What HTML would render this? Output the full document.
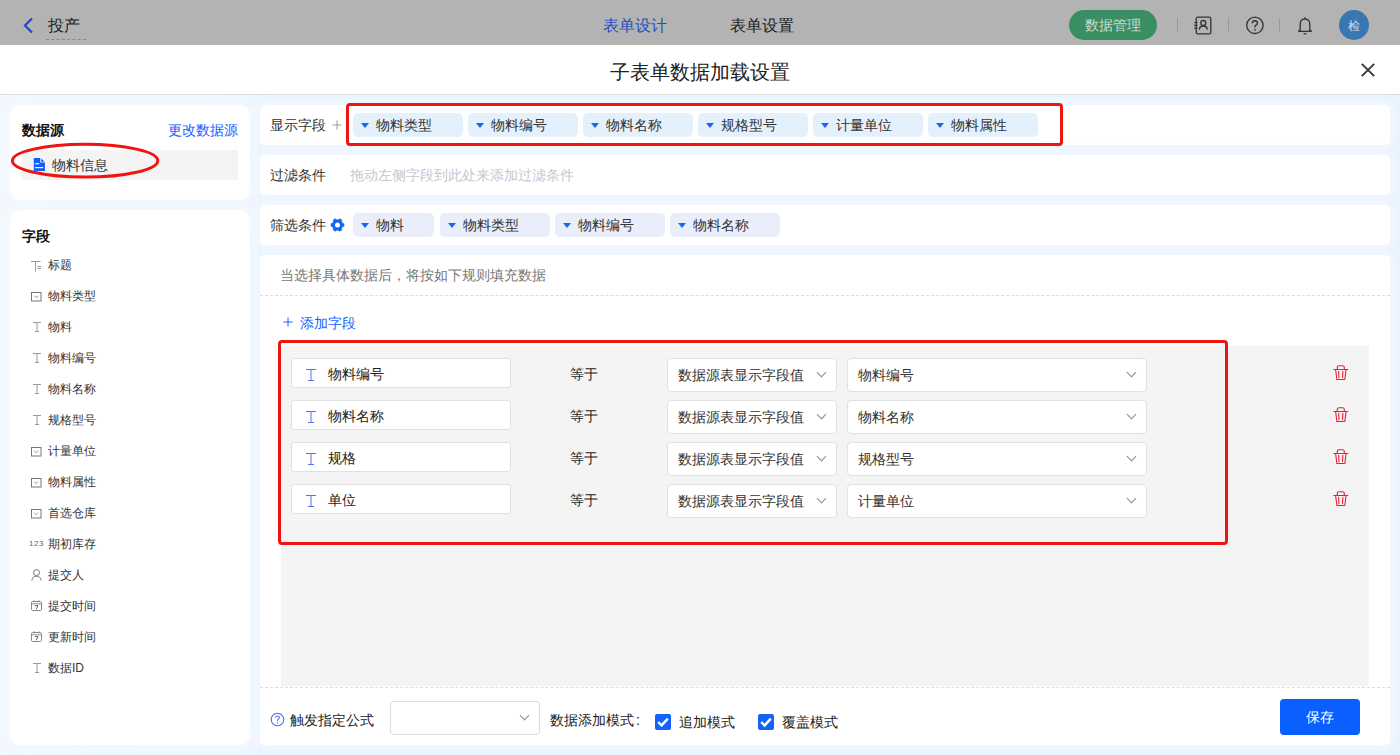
<!DOCTYPE html>
<html><head><meta charset="utf-8">
<style>
*{box-sizing:border-box;margin:0;padding:0}
html,body{width:1400px;height:755px;overflow:hidden}
body{position:relative;background:#e9f3fe;font-family:"Liberation Sans",sans-serif;font-size:14px;color:#222}
.a{position:absolute}
.t{position:absolute;white-space:nowrap;line-height:1}
#hdr{left:0;top:0;width:1400px;height:45px;background:#b3b3b3}
#ttl{left:0;top:45px;width:1400px;height:50px;background:#fff;border-bottom:1px solid #dcdcdc}
.card{position:absolute;background:#fff;border-radius:10px;box-shadow:0 0 10px 4px rgba(243,249,255,0.95)}
.row{position:absolute;left:260px;width:1130px;height:40px;background:#fff;border-radius:5px;box-shadow:0 0 10px 4px rgba(243,249,255,0.95)}
.tag{position:absolute;height:24px;border-radius:5px;background:#e4f1fd}
.tag2{background:#e9eefa}
.tri{position:absolute;left:8px;top:10px;width:0;height:0;border-left:4px solid transparent;border-right:4px solid transparent;border-top:5px solid #1766f5}
.tag .t{left:23px;top:5px;font-size:14px;color:#333}
.fi{position:absolute;left:22px;width:200px;height:20px}
.fi .t{left:26px;top:4px;font-size:12px;color:#333}
.inp{position:absolute;left:291px;width:220px;height:30px;background:#fff;border:1px solid #e1e1e1;border-radius:3px}
.sel{position:absolute;height:34px;background:#fff;border:1px solid #e1e1e1;border-radius:4px}
.sel .t{top:9px;left:10px;color:#333}
.chev{position:absolute;width:7px;height:7px;border-right:1px solid #8a8a8a;border-bottom:1px solid #8a8a8a;transform:rotate(45deg)}
</style></head><body>

<!-- header -->
<div id="hdr" class="a">
  <svg class="a" style="left:22px;top:17px" width="12" height="17" viewBox="0 0 12 17"><path d="M10 1.5 L3 8.5 L10 15.5" fill="none" stroke="#1f48c8" stroke-width="2.2"/></svg>
  <div class="t" style="left:48px;top:18px;font-size:16px;color:#222">投产</div>
  <div class="a" style="left:46px;top:39px;width:40px;border-top:1px dashed #8a8a8a"></div>
  <div class="t" style="left:603px;top:18px;font-size:16px;color:#1e4fc4">表单设计</div>
  <div class="t" style="left:730px;top:18px;font-size:16px;color:#222">表单设置</div>
  <div class="a" style="left:1069px;top:10px;width:88px;height:30px;border-radius:15px;background:#3a8f62"></div>
  <div class="t" style="left:1085px;top:18px;font-size:14px;color:#c9dccf">数据管理</div>
  <div class="a" style="left:1177px;top:18px;width:1px;height:14px;background:#999"></div>
  <div class="a" style="left:1228px;top:18px;width:1px;height:14px;background:#999"></div>
  <div class="a" style="left:1279px;top:18px;width:1px;height:14px;background:#999"></div>
  <svg class="a" style="left:1192px;top:15px" width="22" height="21" viewBox="0 0 22 21"><rect x="4.2" y="2.2" width="14.6" height="16.6" rx="1.6" fill="none" stroke="#333" stroke-width="1.3"/><circle cx="11.3" cy="8" r="2.5" fill="none" stroke="#333" stroke-width="1.3"/><path d="M7.3 14.6 Q7.6 11 11.3 11 Q15 11 15.3 14.6" fill="none" stroke="#333" stroke-width="1.3"/><path d="M2.2 7.5h3.3M2.2 10.4h3.3M2.2 13.2h3.3" stroke="#333" stroke-width="1.2"/></svg>
  <svg class="a" style="left:1245px;top:16px" width="20" height="20" viewBox="0 0 20 20"><circle cx="9.9" cy="9.3" r="8.2" fill="none" stroke="#333" stroke-width="1.3"/><path d="M7.3 7.3 Q7.5 4.8 9.9 4.8 Q12.4 4.8 12.4 7 Q12.4 8.5 10.6 9.4 Q9.9 9.8 9.9 11.5" fill="none" stroke="#333" stroke-width="1.4"/><circle cx="9.9" cy="13.8" r="0.9" fill="#333"/></svg>
  <svg class="a" style="left:1296px;top:15px" width="18" height="21" viewBox="0 0 18 21"><path d="M4.2 15.8 L4.2 9.5 Q4.2 4 9 4 Q13.8 4 13.8 9.5 L13.8 15.8" fill="none" stroke="#333" stroke-width="1.3"/><path d="M2.3 16.2 Q4.2 15.6 4.2 14.5 M15.7 16.2 Q13.8 15.6 13.8 14.5 M2.3 16.3h13.4" fill="none" stroke="#333" stroke-width="1.3"/><path d="M7.6 18.8h2.8" stroke="#333" stroke-width="1.3"/><path d="M9 2.2v1.6" stroke="#333" stroke-width="1.3"/></svg>
  <div class="a" style="left:1339px;top:10px;width:30px;height:30px;border-radius:15px;background:#3a77b0"></div>
  <div class="t" style="left:1348px;top:20px;font-size:12px;color:#d0dae3">检</div>
</div>

<!-- title -->
<div id="ttl" class="a">
  <div class="t" style="left:610px;top:17px;font-size:20px;color:#222">子表单数据加载设置</div>
  <svg class="a" style="left:1360px;top:17px" width="16" height="16" viewBox="0 0 16 16"><path d="M1.8 1.8L14.2 14.2M14.2 1.8L1.8 14.2" stroke="#333" stroke-width="1.8"/></svg>
</div>

<div class="a" style="left:0;top:95px;width:258px;height:660px;background:linear-gradient(to right,#f3f8fe,#eef6fe 200px,#edf5fe)"></div>
<!-- left card 1 -->
<div class="card" style="left:10px;top:105px;width:240px;height:95px">
  <div class="t" style="left:12px;top:18px;font-size:14px;font-weight:bold;color:#111">数据源</div>
  <div class="t" style="left:158px;top:18px;font-size:14px;color:#1560ff">更改数据源</div>
  <div class="a" style="left:12px;top:45px;width:216px;height:30px;background:#f4f4f4"></div>
  <svg class="a" style="left:23px;top:53px" width="12" height="13" viewBox="0 0 12 13"><path d="M0.8 0H7.2V4.6H11.9V13H0.8Z" fill="#0d5efc"/><path d="M8.2 0.6L11.6 3.8H8.2Z" fill="#0d5efc"/><rect x="2" y="5.1" width="4.2" height="1.2" fill="#f4f4f4"/><rect x="2" y="9" width="8.2" height="1.2" fill="#f4f4f4"/></svg>
  <div class="t" style="left:42px;top:53px;font-size:14px;color:#333">物料信息</div>
</div>
<svg class="a" style="left:10px;top:142px" width="152" height="40" viewBox="0 0 152 40"><ellipse cx="75.1" cy="18.7" rx="72.7" ry="16.4" fill="none" stroke="#f01410" stroke-width="3"/></svg>

<!-- left card 2 -->
<div class="card" style="left:10px;top:210px;width:240px;height:535px">
  <div class="t" style="left:12px;top:19px;font-size:14px;font-weight:bold;color:#111">字段</div>
</div>
<svg class="a" style="left:31px;top:261px" width="11" height="11" viewBox="0 0 11 11"><path d="M0 0.5H9.5M4.5 0.5V10.5" fill="none" stroke="#999" stroke-width="1"/><path d="M6.5 5.5H10M6.5 7.5H10" fill="none" stroke="#888" stroke-width="0.9"/></svg>
<div class="t" style="left:48px;top:259px;font-size:12px;color:#333">标题</div>
<svg class="a" style="left:31px;top:292px" width="11" height="10" viewBox="0 0 11 10"><rect x="0.5" y="0.5" width="9.5" height="8.5" fill="none" stroke="#777" stroke-width="1"/><path d="M3.3 3.8L5.25 5.6L7.2 3.8" fill="none" stroke="#888" stroke-width="0.9"/></svg>
<div class="t" style="left:48px;top:290px;font-size:12px;color:#333">物料类型</div>
<svg class="a" style="left:33px;top:322px" width="8" height="10" viewBox="0 0 8 10"><path d="M0 0.5H8M4 0.5V9.5M2 9.5H6" fill="none" stroke="#999" stroke-width="1"/></svg>
<div class="t" style="left:48px;top:321px;font-size:12px;color:#333">物料</div>
<svg class="a" style="left:33px;top:353px" width="8" height="10" viewBox="0 0 8 10"><path d="M0 0.5H8M4 0.5V9.5M2 9.5H6" fill="none" stroke="#999" stroke-width="1"/></svg>
<div class="t" style="left:48px;top:352px;font-size:12px;color:#333">物料编号</div>
<svg class="a" style="left:33px;top:384px" width="8" height="10" viewBox="0 0 8 10"><path d="M0 0.5H8M4 0.5V9.5M2 9.5H6" fill="none" stroke="#999" stroke-width="1"/></svg>
<div class="t" style="left:48px;top:383px;font-size:12px;color:#333">物料名称</div>
<svg class="a" style="left:33px;top:415px" width="8" height="10" viewBox="0 0 8 10"><path d="M0 0.5H8M4 0.5V9.5M2 9.5H6" fill="none" stroke="#999" stroke-width="1"/></svg>
<div class="t" style="left:48px;top:414px;font-size:12px;color:#333">规格型号</div>
<svg class="a" style="left:31px;top:447px" width="11" height="10" viewBox="0 0 11 10"><rect x="0.5" y="0.5" width="9.5" height="8.5" fill="none" stroke="#777" stroke-width="1"/><path d="M3.3 3.8L5.25 5.6L7.2 3.8" fill="none" stroke="#888" stroke-width="0.9"/></svg>
<div class="t" style="left:48px;top:445px;font-size:12px;color:#333">计量单位</div>
<svg class="a" style="left:31px;top:478px" width="11" height="10" viewBox="0 0 11 10"><rect x="0.5" y="0.5" width="9.5" height="8.5" fill="none" stroke="#777" stroke-width="1"/><path d="M3.3 3.8L5.25 5.6L7.2 3.8" fill="none" stroke="#888" stroke-width="0.9"/></svg>
<div class="t" style="left:48px;top:476px;font-size:12px;color:#333">物料属性</div>
<svg class="a" style="left:31px;top:509px" width="11" height="10" viewBox="0 0 11 10"><rect x="0.5" y="0.5" width="9.5" height="8.5" fill="none" stroke="#777" stroke-width="1"/><path d="M3.3 3.8L5.25 5.6L7.2 3.8" fill="none" stroke="#888" stroke-width="0.9"/></svg>
<div class="t" style="left:48px;top:507px;font-size:12px;color:#333">首选仓库</div>
<div class="t" style="left:29px;top:540px;font-size:8px;color:#666;letter-spacing:0.5px">123</div>
<div class="t" style="left:48px;top:538px;font-size:12px;color:#333">期初库存</div>
<svg class="a" style="left:31px;top:569px" width="11" height="12" viewBox="0 0 11 12"><circle cx="5.5" cy="3.6" r="3" fill="none" stroke="#777" stroke-width="1"/><path d="M0.8 11.5Q1.5 7.2 5.5 7.2Q9.5 7.2 10.2 11.5" fill="none" stroke="#777" stroke-width="1"/></svg>
<div class="t" style="left:48px;top:569px;font-size:12px;color:#333">提交人</div>
<svg class="a" style="left:31px;top:600px" width="11" height="11" viewBox="0 0 11 11"><rect x="0.5" y="1.5" width="10" height="9" rx="1.2" fill="none" stroke="#888" stroke-width="1"/><path d="M0.5 3.8H10.5M3 0.3V2.3M8 0.3V2.3" fill="none" stroke="#888" stroke-width="0.9"/><path d="M3.9 5.6H7L5.2 9.2" fill="none" stroke="#666" stroke-width="1"/></svg>
<div class="t" style="left:48px;top:600px;font-size:12px;color:#333">提交时间</div>
<svg class="a" style="left:31px;top:631px" width="11" height="11" viewBox="0 0 11 11"><rect x="0.5" y="1.5" width="10" height="9" rx="1.2" fill="none" stroke="#888" stroke-width="1"/><path d="M0.5 3.8H10.5M3 0.3V2.3M8 0.3V2.3" fill="none" stroke="#888" stroke-width="0.9"/><path d="M3.9 5.6H7L5.2 9.2" fill="none" stroke="#666" stroke-width="1"/></svg>
<div class="t" style="left:48px;top:631px;font-size:12px;color:#333">更新时间</div>
<svg class="a" style="left:33px;top:663px" width="8" height="10" viewBox="0 0 8 10"><path d="M0 0.5H8M4 0.5V9.5M2 9.5H6" fill="none" stroke="#999" stroke-width="1"/></svg>
<div class="t" style="left:48px;top:662px;font-size:12px;color:#333">数据ID</div>

<!-- right rows -->
<div class="row" style="top:105px">
  <div class="t" style="left:10px;top:13px;color:#333">显示字段</div>
  <svg class="a" style="left:72px;top:15px" width="10" height="10" viewBox="0 0 10 10"><path d="M5 0.5V9.5M0.5 5H9.5" stroke="#999" stroke-width="1"/></svg>
</div>
<div class="row" style="top:155px">
  <div class="t" style="left:10px;top:13px;color:#333">过滤条件</div>
  <div class="t" style="left:90px;top:13px;color:#c4c8d0">拖动左侧字段到此处来添加过滤条件</div>
</div>
<div class="row" style="top:205px">
  <div class="t" style="left:10px;top:13px;color:#333">筛选条件</div>
</div>

<!-- main panel -->
<div class="card" style="left:260px;top:255px;width:1130px;height:490px;border-radius:5px">
  <div class="t" style="left:20px;top:13px;color:#777">当选择具体数据后，将按如下规则填充数据</div>
  <div class="a" style="left:0;top:40px;width:1130px;border-top:1px dashed #dedede"></div>
  <svg class="a" style="left:23px;top:62px" width="11" height="11" viewBox="0 0 11 11"><path d="M5 0.5V9.5M0.5 5H9.5" stroke="#1560ff" stroke-width="1"/></svg>
  <div class="t" style="left:40px;top:61px;color:#1560ff">添加字段</div>
  <div class="a" style="left:21px;top:91px;width:1088px;height:340px;background:#f4f4f4"></div>
  <div class="a" style="left:0;top:432px;width:1130px;border-top:1px dashed #dedede"></div>
</div>

<div class="tag" style="left:353px;top:113px;width:110px"><div class="tri"></div><div class="t">物料类型</div></div>
<div class="tag" style="left:468px;top:113px;width:110px"><div class="tri"></div><div class="t">物料编号</div></div>
<div class="tag" style="left:583px;top:113px;width:110px"><div class="tri"></div><div class="t">物料名称</div></div>
<div class="tag" style="left:698px;top:113px;width:110px"><div class="tri"></div><div class="t">规格型号</div></div>
<div class="tag" style="left:813px;top:113px;width:110px"><div class="tri"></div><div class="t">计量单位</div></div>
<div class="tag" style="left:928px;top:113px;width:110px"><div class="tri"></div><div class="t">物料属性</div></div>
<div class="a" style="left:346px;top:103px;width:717px;height:43px;border:3px solid #f01410;border-radius:4px"></div>
<div class="tag tag2" style="left:353px;top:213px;width:81px"><div class="tri"></div><div class="t">物料</div></div>
<div class="tag tag2" style="left:440px;top:213px;width:110px"><div class="tri"></div><div class="t">物料类型</div></div>
<div class="tag tag2" style="left:555px;top:213px;width:110px"><div class="tri"></div><div class="t">物料编号</div></div>
<div class="tag tag2" style="left:670px;top:213px;width:110px"><div class="tri"></div><div class="t">物料名称</div></div>
<svg class="a" style="left:330px;top:218px" width="15" height="14" viewBox="0 0 15 14"><path d="M12.09 4.35 L12.57 5.45 L13.96 5.63 L13.96 8.37 L12.57 8.55 L12.09 9.65 L11.38 10.61 L11.92 11.90 L9.54 13.28 L8.69 12.16 L7.50 12.30 L6.31 12.16 L5.46 13.28 L3.08 11.90 L3.62 10.61 L2.91 9.65 L2.43 8.55 L1.04 8.37 L1.04 5.63 L2.43 5.45 L2.91 4.35 L3.62 3.39 L3.08 2.10 L5.46 0.72 L6.31 1.84 L7.50 1.70 L8.69 1.84 L9.54 0.72 L11.92 2.10 L11.38 3.39Z" fill="#1262fb" stroke="#1262fb" stroke-width="0.6" stroke-linejoin="round"/><circle cx="7.5" cy="7" r="2.5" fill="#fff"/></svg>
<div class="inp" style="top:358px"></div>
<svg class="a" style="left:306px;top:369px" width="10" height="13" viewBox="0 0 10 13"><path d="M0 0.5H10M5 0.5V11.5M2 11.5H8" fill="none" stroke="#5870f2" stroke-width="1"/></svg>
<div class="t" style="left:328px;top:367px;color:#222">物料编号</div>
<div class="t" style="left:570px;top:367px;color:#222">等于</div>
<div class="sel" style="left:667px;top:358px;width:170px"><div class="t">数据源表显示字段值</div><div class="chev" style="left:150px;top:10px"></div></div>
<div class="sel" style="left:847px;top:358px;width:300px"><div class="t">物料编号</div><div class="chev" style="left:280px;top:10px"></div></div>
<svg class="a" style="left:1333px;top:365px" width="16" height="16" viewBox="0 0 16 16"><path d="M0.8 4.5H14.8M4.3 4.5V2.4Q4.3 0.8 6 0.8H9.6Q11.3 0.8 11.3 2.4V4.5M2.6 4.5L3.9 14.5H11.8L13.1 4.5M5.6 6.2L6 12.6M9.9 6.2L9.5 12.6" fill="none" stroke="#f01c30" stroke-width="1.1" stroke-linecap="round"/></svg>
<div class="inp" style="top:400px"></div>
<svg class="a" style="left:306px;top:411px" width="10" height="13" viewBox="0 0 10 13"><path d="M0 0.5H10M5 0.5V11.5M2 11.5H8" fill="none" stroke="#5870f2" stroke-width="1"/></svg>
<div class="t" style="left:328px;top:409px;color:#222">物料名称</div>
<div class="t" style="left:570px;top:409px;color:#222">等于</div>
<div class="sel" style="left:667px;top:400px;width:170px"><div class="t">数据源表显示字段值</div><div class="chev" style="left:150px;top:10px"></div></div>
<div class="sel" style="left:847px;top:400px;width:300px"><div class="t">物料名称</div><div class="chev" style="left:280px;top:10px"></div></div>
<svg class="a" style="left:1333px;top:407px" width="16" height="16" viewBox="0 0 16 16"><path d="M0.8 4.5H14.8M4.3 4.5V2.4Q4.3 0.8 6 0.8H9.6Q11.3 0.8 11.3 2.4V4.5M2.6 4.5L3.9 14.5H11.8L13.1 4.5M5.6 6.2L6 12.6M9.9 6.2L9.5 12.6" fill="none" stroke="#f01c30" stroke-width="1.1" stroke-linecap="round"/></svg>
<div class="inp" style="top:442px"></div>
<svg class="a" style="left:306px;top:453px" width="10" height="13" viewBox="0 0 10 13"><path d="M0 0.5H10M5 0.5V11.5M2 11.5H8" fill="none" stroke="#5870f2" stroke-width="1"/></svg>
<div class="t" style="left:328px;top:451px;color:#222">规格</div>
<div class="t" style="left:570px;top:451px;color:#222">等于</div>
<div class="sel" style="left:667px;top:442px;width:170px"><div class="t">数据源表显示字段值</div><div class="chev" style="left:150px;top:10px"></div></div>
<div class="sel" style="left:847px;top:442px;width:300px"><div class="t">规格型号</div><div class="chev" style="left:280px;top:10px"></div></div>
<svg class="a" style="left:1333px;top:449px" width="16" height="16" viewBox="0 0 16 16"><path d="M0.8 4.5H14.8M4.3 4.5V2.4Q4.3 0.8 6 0.8H9.6Q11.3 0.8 11.3 2.4V4.5M2.6 4.5L3.9 14.5H11.8L13.1 4.5M5.6 6.2L6 12.6M9.9 6.2L9.5 12.6" fill="none" stroke="#f01c30" stroke-width="1.1" stroke-linecap="round"/></svg>
<div class="inp" style="top:484px"></div>
<svg class="a" style="left:306px;top:495px" width="10" height="13" viewBox="0 0 10 13"><path d="M0 0.5H10M5 0.5V11.5M2 11.5H8" fill="none" stroke="#5870f2" stroke-width="1"/></svg>
<div class="t" style="left:328px;top:493px;color:#222">单位</div>
<div class="t" style="left:570px;top:493px;color:#222">等于</div>
<div class="sel" style="left:667px;top:484px;width:170px"><div class="t">数据源表显示字段值</div><div class="chev" style="left:150px;top:10px"></div></div>
<div class="sel" style="left:847px;top:484px;width:300px"><div class="t">计量单位</div><div class="chev" style="left:280px;top:10px"></div></div>
<svg class="a" style="left:1333px;top:491px" width="16" height="16" viewBox="0 0 16 16"><path d="M0.8 4.5H14.8M4.3 4.5V2.4Q4.3 0.8 6 0.8H9.6Q11.3 0.8 11.3 2.4V4.5M2.6 4.5L3.9 14.5H11.8L13.1 4.5M5.6 6.2L6 12.6M9.9 6.2L9.5 12.6" fill="none" stroke="#f01c30" stroke-width="1.1" stroke-linecap="round"/></svg>
<div class="a" style="left:278px;top:340px;width:950px;height:205px;border:3px solid #f01410;border-radius:4px"></div>
<svg class="a" style="left:270px;top:712px" width="15" height="15" viewBox="0 0 15 15"><circle cx="7.5" cy="7.5" r="6.3" fill="none" stroke="#4a6cf0" stroke-width="1.1"/><path d="M5.6 5.8Q5.7 4 7.5 4Q9.4 4 9.4 5.6Q9.4 6.8 8 7.4Q7.5 7.7 7.5 9" fill="none" stroke="#4a6cf0" stroke-width="1.1"/><circle cx="7.5" cy="10.9" r="0.7" fill="#4a6cf0"/></svg>
<div class="t" style="left:290px;top:713px;color:#222">触发指定公式</div>
<div class="sel" style="left:390px;top:701px;width:150px;height:34px;border-color:#dcdcdc"><div class="chev" style="left:130px;top:10px"></div></div>
<div class="t" style="left:550px;top:713px;color:#222">数据添加模式<span style="margin-left:2px">:</span></div>
<div class="a" style="left:655px;top:714px;width:16px;height:16px;background:#1262fb;border-radius:2px"></div>
<svg class="a" style="left:655px;top:714px" width="16" height="16" viewBox="0 0 16 16"><path d="M3.2 8L6.6 11.4L12.8 4.6" fill="none" stroke="#fff" stroke-width="2.4"/></svg>
<div class="t" style="left:679px;top:715px;color:#222">追加模式</div>
<div class="a" style="left:758px;top:714px;width:16px;height:16px;background:#1262fb;border-radius:2px"></div>
<svg class="a" style="left:758px;top:714px" width="16" height="16" viewBox="0 0 16 16"><path d="M3.2 8L6.6 11.4L12.8 4.6" fill="none" stroke="#fff" stroke-width="2.4"/></svg>
<div class="t" style="left:782px;top:715px;color:#222">覆盖模式</div>
<div class="a" style="left:1280px;top:699px;width:80px;height:36px;background:#0a60ff;border-radius:4px"></div>
<div class="t" style="left:1306px;top:710px;color:#fff">保存</div>
</body></html>
